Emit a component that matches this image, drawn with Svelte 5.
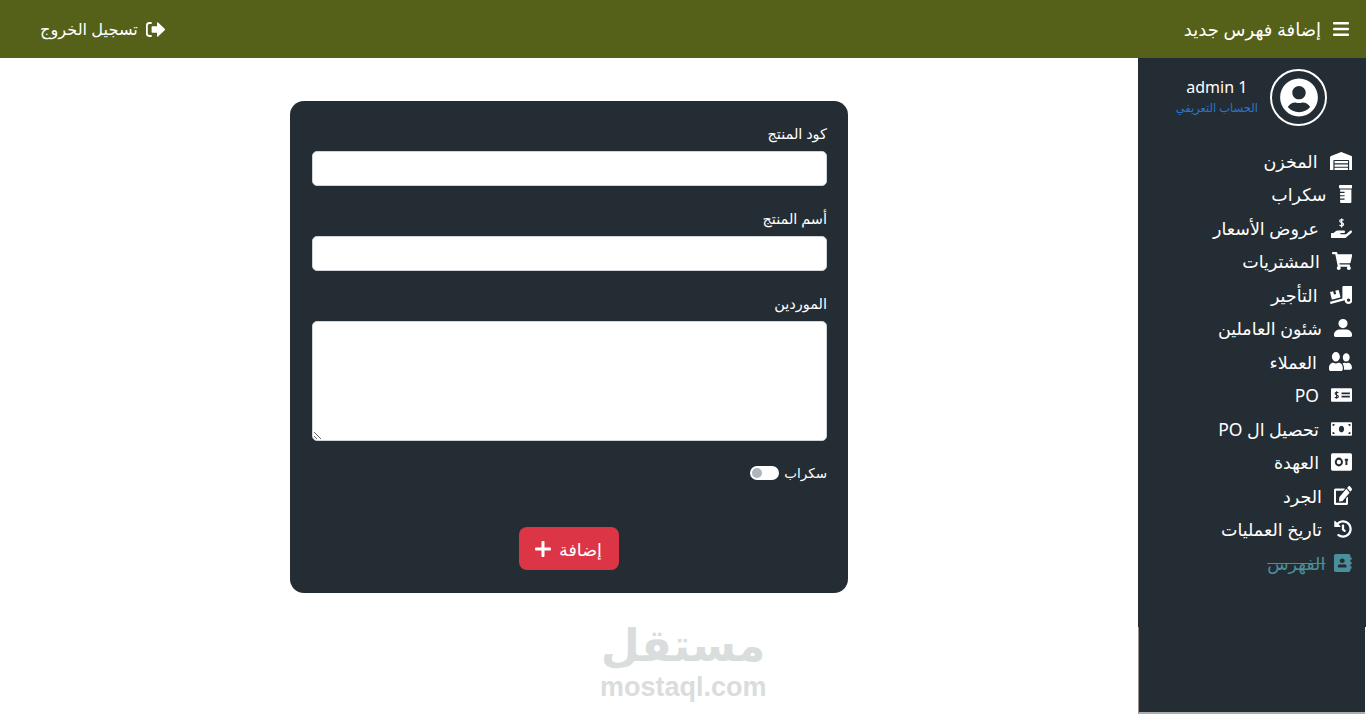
<script>
    const menu = [
        { label: 'المخزن', vb: '0 0 640 512', d: 'M504 352H136.4c-4.4 0-8 3.6-8 8l-.1 48c0 4.4 3.6 8 8 8H504c4.4 0 8-3.6 8-8v-48c0-4.4-3.6-8-8-8zm0 96H136.1c-4.4 0-8 3.6-8 8l-.1 48c0 4.4 3.6 8 8 8h368c4.4 0 8-3.6 8-8v-48c0-4.4-3.6-8-8-8zm0-192H136.6c-4.4 0-8 3.6-8 8l-.1 48c0 4.4 3.6 8 8 8H504c4.4 0 8-3.6 8-8v-48c0-4.4-3.6-8-8-8zm106.5-139L338.4 3.7a48.15 48.15 0 0 0-36.9 0L29.5 117C11.7 124.5 0 141.9 0 161.3V504c0 4.4 3.6 8 8 8h80c4.4 0 8-3.6 8-8V256c0-17.6 14.6-32 32.6-32h382.8c18 0 32.6 14.4 32.6 32v248c0 4.4 3.6 8 8 8h80c4.4 0 8-3.6 8-8V161.3c0-19.4-11.7-36.8-29.5-44.3z' },
        { label: 'سكراب', vb: '0 0 384 512', d: 'M32 192h120c4.4 0 8 3.6 8 8v16c0 4.4-3.6 8-8 8H32v64h120c4.4 0 8 3.6 8 8v16c0 4.4-3.6 8-8 8H32v64h120c4.4 0 8 3.6 8 8v16c0 4.4-3.6 8-8 8H32v64c0 17.6 14.4 32 32 32h256c17.6 0 32-14.4 32-32V128H32v64zM360 0H24C10.8 0 0 10.8 0 24v48c0 13.2 10.8 24 24 24h336c13.2 0 24-10.8 24-24V24c0-13.2-10.8-24-24-24z' },
        { label: 'عروض الأسعار', vb: '0 0 576 512', w: 21, h: 20, d: 'M565.3 328.1c-11.8-10.7-30.2-10-42.6 0L430.3 402c-11.3 9.1-25.4 14-40 14H272c-8.8 0-16-7.2-16-16s7.2-16 16-16h78.3c15.9 0 30.7-10.9 33.3-26.6 3.3-20-12.1-37.4-31.6-37.4H192c-27 0-53.1 9.3-74.1 26.3L71.4 384H16c-8.8 0-16 7.2-16 16v96c0 8.8 7.2 16 16 16h356.7c14.5 0 28.6-4.9 40-14l151.2-121c15.2-12.2 16.4-34.9 1.4-48.9z', over: 'M345 60c-25-25-100-25-105 18c-3 48 105 38 105 86c-3 42-80 42-110 16M292 10v232', overColor: '#fff', overWidth: 34 },
        { label: 'المشتريات', vb: '0 0 576 512', d: 'M528.12 301.319l47.273-208C578.806 78.301 567.391 64 551.99 64H159.208l-9.166-44.81C147.758 8.021 137.93 0 126.529 0H24C10.745 0 0 10.745 0 24v16c0 13.255 10.745 24 24 24h69.883l70.248 343.435C147.325 417.1 136 435.222 136 456c0 30.928 25.072 56 56 56s56-25.072 56-56c0-15.674-6.447-29.835-16.824-40h209.647C430.447 426.165 424 440.326 424 456c0 30.928 25.072 56 56 56s56-25.072 56-56c0-22.172-12.888-41.332-31.579-50.405l5.517-24.276c3.413-15.018-8.002-29.319-23.403-29.319H218.117l-6.545-32h293.145c11.206 0 20.92-7.754 23.403-18.681z' },
        { label: 'التأجير', vb: '0 0 640 512', d: 'M50.2 375.6c2.3 8.5 11.1 13.6 19.6 11.3l216.4-58c8.5-2.3 13.6-11.1 11.3-19.6l-49.7-185.5c-2.3-8.5-11.1-13.6-19.6-11.3L151 133.3l24.8 92.7-61.8 16.5-24.8-92.7-77.3 20.7C3.4 152.8-1.7 161.6.6 170.1l49.6 205.5zM384 0c-17.7 0-32 14.3-32 32v323.6L5.9 450c-4.3 1.2-6.8 5.6-5.6 9.8l12.6 46.3c1.2 4.3 5.6 6.8 9.8 5.6l393.7-107.4C418.8 464.1 467.6 512 528 512c61.9 0 112-50.1 112-112V0H384zm144 448c-26.5 0-48-21.5-48-48s21.5-48 48-48 48 21.5 48 48-21.5 48-48 48z' },
        { label: 'شئون العاملين', vb: '0 0 512 512', d: 'M256 0a130 130 0 1 1 0 260a130 130 0 1 1 0-260zM176 300h160c96 0 176 60 176 140v30c0 23-19 42-42 42H42c-23 0-42-19-42-42v-30c0-80 80-140 176-140z' },
        { label: 'العملاء', vb: '0 32 640 448', w: 23, h: 19, d: 'M192 256c61.9 0 112-50.1 112-112S253.9 32 192 32 80 82.1 80 144s50.1 112 112 112zm76.8 32h-8.3c-20.8 10-43.9 16-68.5 16s-47.6-6-68.5-16h-8.3C51.6 288 0 339.6 0 403.2V432c0 26.5 21.5 48 48 48h288c26.5 0 48-21.5 48-48v-28.8c0-63.6-51.6-115.2-115.2-115.2zM480 256c53 0 96-43 96-96s-43-96-96-96-96 43-96 96 43 96 96 96zm48 32h-3.8c-13.9 4.8-28.6 8-44.2 8s-30.3-3.2-44.2-8H432c-20.4 0-39.2 5.9-55.7 15.4 24.4 26.3 39.7 61.2 39.7 99.8v38.4c0 2.2-.5 4.3-.6 6.4H592c26.5 0 48-21.5 48-48 0-61.9-50.1-112-112-112z' },
        { label: 'PO', vb: '0 0 640 512', w: 21, d: 'M32 64H608a32 32 0 0 1 32 32V416a32 32 0 0 1-32 32H32a32 32 0 0 1-32-32V96a32 32 0 0 1 32-32zM320 184h256v48H320zM320 280h256v48H320z', over: 'M225 195c-20-25-95-25-100 15c-3 48 100 42 100 90c-3 40-85 40-108 14M170 150v212', overColor: '#252d34', overWidth: 34 },
        { label: 'تحصيل ال PO', vb: '0 0 640 512', w: 21, d: 'M608 64H32C14.33 64 0 78.33 0 96v320c0 17.67 14.33 32 32 32h576c17.67 0 32-14.33 32-32V96c0-17.67-14.33-32-32-32zM48 400v-64c35.35 0 64 28.65 64 64H48zm0-224v-64h64c0 35.35-28.65 64-64 64zm272 176c-44.19 0-80-42.99-80-96 0-53.02 35.82-96 80-96s80 42.98 80 96c0 53.03-35.83 96-80 96zm272 48h-64c0-35.35 28.65-64 64-64v64zm0-224c-35.35 0-64-28.65-64-64h64v64z' },
        { label: 'العهدة', vb: '0 0 640 512', w: 21, d: 'M48 8H592a48 48 0 0 1 48 48V456a48 48 0 0 1-48 48H48a48 48 0 0 1-48-48V56a48 48 0 0 1 48-48z', over: 'M335 256a95 95 0 1 1-190 0a95 95 0 1 1 190 0zM470 170v170M420 190h100', overColor: '#252d34', overWidth: 60 },
        { label: 'الجرد', vb: '0 0 576 512', w: 18, h: 19, d: 'M402.6 83.2l90.2 90.2c3.8 3.8 3.8 10 0 13.8L274.4 405.6l-92.8 10.3c-12.4 1.4-22.9-9.1-21.5-21.5l10.3-92.8L388.8 83.2c3.8-3.8 10-3.8 13.8 0zm162-22.9l-48.8-48.8c-15.2-15.2-39.9-15.2-55.2 0l-35.4 35.4c-3.8 3.8-3.8 10 0 13.8l90.2 90.2c3.8 3.8 10 3.8 13.8 0l35.4-35.4c15.2-15.3 15.2-40 0-55.2zM384 346.2V448H64V128h229.8c3.2 0 6.2-1.3 8.5-3.5l40-40c7.6-7.6 2.2-20.5-8.5-20.5H48C21.5 64 0 85.5 0 112v352c0 26.5 21.5 48 48 48h352c26.5 0 48-21.5 48-48V306.2c0-10.7-12.9-16-20.5-8.5l-40 40c-2.2 2.3-3.5 5.3-3.5 8.5z' },
        { label: 'تاريخ العمليات', vb: '0 0 512 512', d: 'M504 255.531c.253 136.64-111.18 248.372-247.82 248.468-59.015.042-113.223-20.53-155.822-54.911-11.077-8.94-11.905-25.541-1.839-35.607l11.267-11.267c8.609-8.609 22.353-9.551 31.891-1.984C173.062 425.135 212.781 440 256 440c101.705 0 184-82.311 184-184 0-101.705-82.311-184-184-184-48.814 0-93.149 18.969-126.068 49.932l50.754 50.754c10.08 10.08 2.941 27.314-11.313 27.314H24c-8.837 0-16-7.163-16-16V38.627c0-14.254 17.234-21.393 27.314-11.314l49.372 49.372C129.209 34.136 189.552 8 256 8c136.81 0 247.747 110.78 248 247.531zm-180.912 78.784l9.823-12.63c8.138-10.463 6.253-25.542-4.21-33.679L288 256.349V152c0-13.255-10.745-24-24-24h-16c-13.255 0-24 10.745-24 24v135.651l65.409 50.874c10.463 8.137 25.541 6.253 33.679-4.21z' },
        { label: 'الفهرس', active: true, vb: '0 0 448 512', w: 17.7, d: 'M436 160c6.6 0 12-5.4 12-12v-40c0-6.6-5.4-12-12-12h-20V48c0-26.5-21.5-48-48-48H48C21.5 0 0 21.5 0 48v416c0 26.5 21.5 48 48 48h320c26.5 0 48-21.5 48-48v-48h20c6.6 0 12-5.4 12-12v-40c0-6.6-5.4-12-12-12h-20v-64h20c6.6 0 12-5.4 12-12v-40c0-6.6-5.4-12-12-12h-20v-64h20zm-228-32c35.3 0 64 28.7 64 64s-28.7 64-64 64-64-28.7-64-64 28.7-64 64-64zm112 236.8c0 10.6-10 19.2-22.4 19.2H118.4C106 384 96 375.4 96 364.8v-19.2c0-31.8 30.1-57.6 67.2-57.6h5c12.3 5.1 25.7 8 39.8 8s27.6-2.9 39.8-8h5c37.1 0 67.2 25.8 67.2 57.6v19.2z' }
    ];

    const iconWidth = (item) => item.w ?? (Number(item.vb.split(' ')[2]) / 512) * 18;
</script>

<div class="page">
    <header class="topbar">
        <div class="top-link">
            <svg class="bars" viewBox="0 0 16 14" width="16" height="14" fill="currentColor">
                <rect width="16" height="2.6" rx="1" />
                <rect y="5.7" width="16" height="2.6" rx="1" />
                <rect y="11.4" width="16" height="2.6" rx="1" />
            </svg>
            <span class="add-text">إضافة فهرس جديد</span>
        </div>
        <div class="top-link logout">
            <svg viewBox="0 0 19 15" width="19" height="15" fill="currentColor">
                <path d="M11 4.2V.9c0-.6.7-.9 1.1-.5l6.6 6.4c.4.4.4 1 0 1.4l-6.6 6.4c-.4.4-1.1.1-1.1-.5v-3.3H6.6c-.6 0-1-.4-1-1V5.2c0-.6.4-1 1-1z" />
                <path d="M5 1H3.2A2.4 2.4 0 0 0 .9 3.4v8.2A2.4 2.4 0 0 0 3.2 14H5" fill="none" stroke="currentColor" stroke-width="1.8" stroke-linecap="round" />
            </svg>
            <span>تسجيل الخروج</span>
        </div>
    </header>

    <div class="body-row">
        <aside class="sidebar">
            <div class="side-top">
                <div class="profile">
                    <div class="avatar">
                        <svg viewBox="0 0 496 512" width="38" height="39" fill="#fff">
                            <path d="M248 8C111 8 0 119 0 256s111 248 248 248 248-111 248-248S385 8 248 8zm0 96c48.6 0 88 39.4 88 88s-39.4 88-88 88-88-39.4-88-88 39.4-88 88-88zm0 344c-58.7 0-111.3-26.6-146.5-68.2 18.8-35.4 55.6-59.8 98.5-59.8 2.4 0 4.8.4 7.1 1.1 13 4.2 26.6 6.9 40.9 6.9 14.3 0 28-2.7 40.9-6.9 2.3-.7 4.7-1.1 7.1-1.1 42.9 0 79.7 24.4 98.5 59.8C359.3 421.4 306.7 448 248 448z" />
                        </svg>
                    </div>
                    <div class="who">
                        <div class="name">admin 1</div>
                        <div class="role">الحساب التعريفي</div>
                    </div>
                </div>
                <nav class="menu">
                    {#each menu as item}
                        <div class={['item', { active: item.active }]}>
                            <svg viewBox={item.vb} width={iconWidth(item)} height={item.h ?? 18} preserveAspectRatio="none" fill="currentColor" fill-rule="evenodd">
                                <path d={item.d} />
                                {#if item.over}
                                    <path d={item.over} fill="none" stroke={item.overColor} stroke-width={item.overWidth} />
                                {/if}
                            </svg>
                            <span>{item.label}</span>
                        </div>
                    {/each}
                </nav>
            </div>
            <div class="side-rest"></div>
        </aside>

        <main class="content">
            <form class="card">
                <div class="field">
                    <label for="code">كود المنتج</label>
                    <input id="code" type="text" />
                </div>
                <div class="field">
                    <label for="name">أسم المنتج</label>
                    <input id="name" type="text" />
                </div>
                <div class="field">
                    <label for="vendors">الموردين</label>
                    <textarea id="vendors"></textarea>
                </div>
                <div class="scrap">
                    <span>سكراب</span>
                    <span class="toggle"><i></i></span>
                </div>
                <div class="actions">
                    <button type="button">
                        <span>إضافة</span>
                        <svg viewBox="0 0 16 16" width="16" height="16" fill="currentColor">
                            <rect x="6.5" width="3" height="16" rx="1" />
                            <rect y="6.5" width="16" height="3" rx="1" />
                        </svg>
                    </button>
                </div>
            </form>
            <div class="watermark">
                <div class="wm-ar">مستقل</div>
                <div class="wm-en">mostaql.com</div>
            </div>
        </main>
    </div>
</div>

<style>
    :global(body) {
        margin: 0;
        overflow: hidden;
        background: #fff;
    }

    .page {
        direction: rtl;
        height: 100vh;
        display: flex;
        flex-direction: column;
        font-family: 'Noto Sans', 'DejaVu Sans', sans-serif;
        color: #fff;
    }

    .topbar {
        height: 58px;
        flex: none;
        background: #556018;
        display: flex;
        align-items: center;
        justify-content: space-between;
        padding: 0 17px 0 40px;
        font-size: 16.2px;
    }

    .add-text {
        font-size: 18px;
    }

    .top-link {
        display: flex;
        align-items: center;
        gap: 12px;
    }

    .logout {
        gap: 8px;
    }

    .body-row {
        flex: 1;
        display: flex;
        min-height: 0;
    }

    .sidebar {
        width: 228px;
        flex: none;
        display: flex;
        flex-direction: column;
    }

    .side-top {
        height: 569px;
        background: #252d34;
        box-sizing: border-box;
        padding: 11px 14px 0 0;
    }

    .side-rest {
        flex: 1;
        margin: 0 1px 1px 0;
        background: #252d34;
        border-left: 1px solid #9a8d88;
        border-bottom: 2px solid #a9aeb1;
    }

    .profile {
        display: flex;
        align-items: center;
        gap: 12px;
        padding-right: 25px;
    }

    .avatar {
        width: 57px;
        height: 57px;
        box-sizing: border-box;
        border: 2px solid #fff;
        border-radius: 50%;
        display: flex;
        align-items: center;
        justify-content: center;
    }

    .who {
        text-align: center;
        padding-bottom: 6px;
    }

    .name {
        font-size: 16px;
        line-height: 24px;
    }

    .role {
        font-size: 11.5px;
        line-height: 14px;
        margin-top: 2px;
        color: #2b76c9;
    }

    .menu {
        margin-top: 18px;
    }

    .item {
        height: 33.5px;
        display: flex;
        align-items: center;
        gap: 12px;
        font-size: 17.5px;
    }

    .item.active {
        gap: 9px;
        color: #4b8f9b;
    }

    .item.active span {
        text-decoration: line-through;
    }

    .content {
        flex: 1;
        position: relative;
        display: flex;
        justify-content: center;
        align-items: flex-start;
    }

    .card {
        width: 558px;
        height: 492px;
        margin-top: 43px;
        box-sizing: border-box;
        padding: 22px 21px 0 22px;
        background: #252d34;
        border-radius: 14px;
    }

    .field {
        margin-bottom: 22px;
    }

    label {
        display: block;
        font-size: 14.5px;
        line-height: 20px;
        margin-bottom: 8px;
    }

    input,
    textarea {
        display: block;
        width: 100%;
        box-sizing: border-box;
        background: #fff;
        border: 1px solid #ced4da;
        border-radius: 5px;
        padding: 0;
        margin: 0;
    }

    input {
        height: 35px;
    }

    textarea {
        height: 120px;
    }

    .scrap {
        display: flex;
        align-items: center;
        gap: 5px;
        margin-top: 2px;
        font-size: 13.5px;
        line-height: 20px;
    }

    .toggle {
        width: 29px;
        height: 14px;
        background: #fff;
        border-radius: 7px;
        display: flex;
        align-items: center;
        justify-content: flex-end;
        padding: 0 2px;
        box-sizing: border-box;
    }

    .toggle i {
        width: 10px;
        height: 10px;
        border-radius: 50%;
        background: #adb5bd;
    }

    .actions {
        display: flex;
        justify-content: center;
        margin-top: 44px;
    }

    button {
        width: 100px;
        height: 43px;
        margin-right: 2px;
        background: #dc3545;
        color: #fff;
        border: none;
        border-radius: 8px;
        display: flex;
        align-items: center;
        justify-content: center;
        gap: 8px;
        font-family: inherit;
        font-size: 17.5px;
        padding: 0;
    }

    .watermark {
        position: absolute;
        left: 600px;
        top: 561px;
        width: 166px;
        text-align: center;
        color: #dadddd;
        font-weight: 700;
    }

    .wm-ar {
        font-size: 45px;
        line-height: 53px;
        white-space: nowrap;
        font-family: 'DejaVu Sans', sans-serif;
    }

    .wm-en {
        direction: ltr;
        font-size: 27px;
        line-height: 31px;
        font-family: 'Liberation Sans', sans-serif;
    }
</style>
